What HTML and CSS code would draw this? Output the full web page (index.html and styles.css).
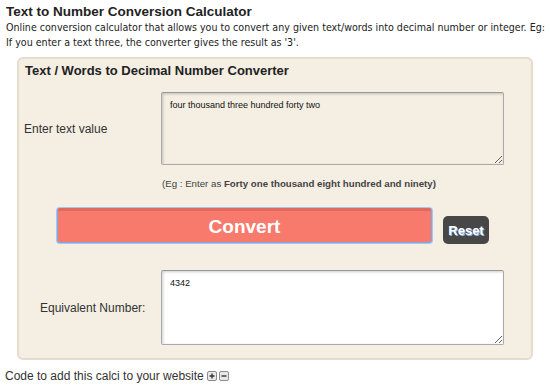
FILE: index.html
```html
<!DOCTYPE html>
<html lang="en">
    <head>
        <meta charset="UTF-8">
        <title>Text to Number Conversion Calculator</title>
        <link rel="stylesheet" href="styles.css">
    </head>
    <body>
        <h1 class="title">Text to Number Conversion Calculator</h1>
        <p class="intro">Online conversion calculator that allows you to convert any given text/words into decimal number or integer. Eg: If you enter a text three, the converter gives the result as '3'.</p>
        <div class="calc">
            <h2 class="calc__head">Text / Words to Decimal Number Converter</h2>
            <div class="calc__row">
                <label class="calc__label" for="words">Enter text value</label>
                <textarea class="calc__field" id="words">four thousand three hundred forty two</textarea>
            </div>
            <p class="calc__hint">(Eg : Enter as <b>Forty one thousand eight hundred and ninety)</b></p>
            <div class="calc__actions">
                <button class="calc__convert" type="button">Convert</button>
                <button class="calc__reset" type="button">Reset</button>
            </div>
            <div class="calc__row">
                <label class="calc__label calc__label--result" for="result">Equivalent Number:</label>
                <textarea class="calc__field calc__field--result" id="result" readonly>4342</textarea>
            </div>
        </div>
        <p class="embed">Code to add this calci to your website
            <span class="embed__icons">
                <svg width="10" height="10" viewBox="0 0 10 10">
                    <rect x="0.5" y="0.5" width="9" height="9" rx="1.5" fill="#e8e8e8" stroke="#8c8c8c"/>
                    <path d="M5 2.5v5M2.5 5h5" stroke="#333" stroke-width="1.4"/>
                </svg>
                <svg width="10" height="10" viewBox="0 0 10 10">
                    <rect x="0.5" y="0.5" width="9" height="9" rx="1.5" fill="#e8e8e8" stroke="#8c8c8c"/>
                    <path d="M2.5 5h5" stroke="#333" stroke-width="1.4"/>
                </svg>
            </span>
        </p>
    </body>
</html>
```

FILE: styles.css
```css
html, body{
    margin: 0;
}

body{
    font-family: "Liberation Sans", Arial, sans-serif;
    color: #222;
    background: #fff;
}

.title{
    margin: 0;
    padding: 3px 0 0 6px;
    font-size: 13.5px;
    line-height: 17px;
    font-weight: bold;
    color: #222;
}

.intro{
    margin: 0;
    padding-left: 6px;
    font-family: "DejaVu Sans Condensed", "DejaVu Sans", sans-serif;
    font-size: 10.6px;
    line-height: 15px;
    color: #222;
}

.calc{
    margin: 7px 0 0 17px;
    width: 512px;
    padding: 0 0 13px;
    background: #f4eee3;
    border: 2px solid #e4dccd;
    border-radius: 6px;
}

.calc__head{
    margin: 0;
    padding: 3px 0 0 6px;
    font-size: 13px;
    line-height: 18px;
    color: #222;
}

.calc__row{
    display: flex;
    align-items: center;
    margin-top: 12px;
}

.calc__label{
    width: 142px;
    padding-left: 5px;
    box-sizing: border-box;
    font-size: 12px;
    color: #333;
}

.calc__label--result{
    padding-left: 21px;
}

.calc__field{
    width: 343px;
    height: 73px;
    box-sizing: border-box;
    padding: 7px 8px;
    font-family: "Liberation Sans", Arial, sans-serif;
    font-size: 9px;
    color: #111;
    background: #f4eee3;
    border: 1px solid #aaa;
    border-top-color: #999;
    border-radius: 2px;
    box-shadow: inset 1px 1px 3px rgba(0, 0, 0, 0.2);
    outline: none;
}

.calc__field--result{
    height: 75px;
    background: #fff;
}

.calc__hint{
    margin: 12px 0 0 143px;
    font-size: 9.7px;
    line-height: 14px;
    color: #444;
}

.calc__actions{
    display: flex;
    align-items: flex-start;
    margin: 17px 0 0 38px;
}

.calc__actions + .calc__row{
    margin-top: 26px;
}

.calc__convert{
    width: 375px;
    height: 35px;
    padding: 0;
    font-family: "Liberation Sans", Arial, sans-serif;
    font-size: 19px;
    font-weight: bold;
    color: #fff;
    background: #f87a6c;
    border: 1px solid #7fa8e4;
    border-top: 3px solid #e06a60;
    border-radius: 3px;
    box-shadow: 0 0 0 1px #a9c6ef;
}

.calc__reset{
    margin: 8px 0 0 11px;
    width: 46px;
    height: 28px;
    padding: 0;
    font-family: "Liberation Sans", Arial, sans-serif;
    font-size: 13px;
    font-weight: bold;
    color: #fff;
    background: #474747;
    border: none;
    border-radius: 5px;
    text-shadow: 1px 1px 0 #8cb4e8;
}

.embed{
    margin: 8px 0 0 5px;
    font-size: 12px;
    line-height: 16px;
    color: #333;
}

.embed__icons{
    display: inline-flex;
    gap: 2px;
    vertical-align: -1px;
}
```
